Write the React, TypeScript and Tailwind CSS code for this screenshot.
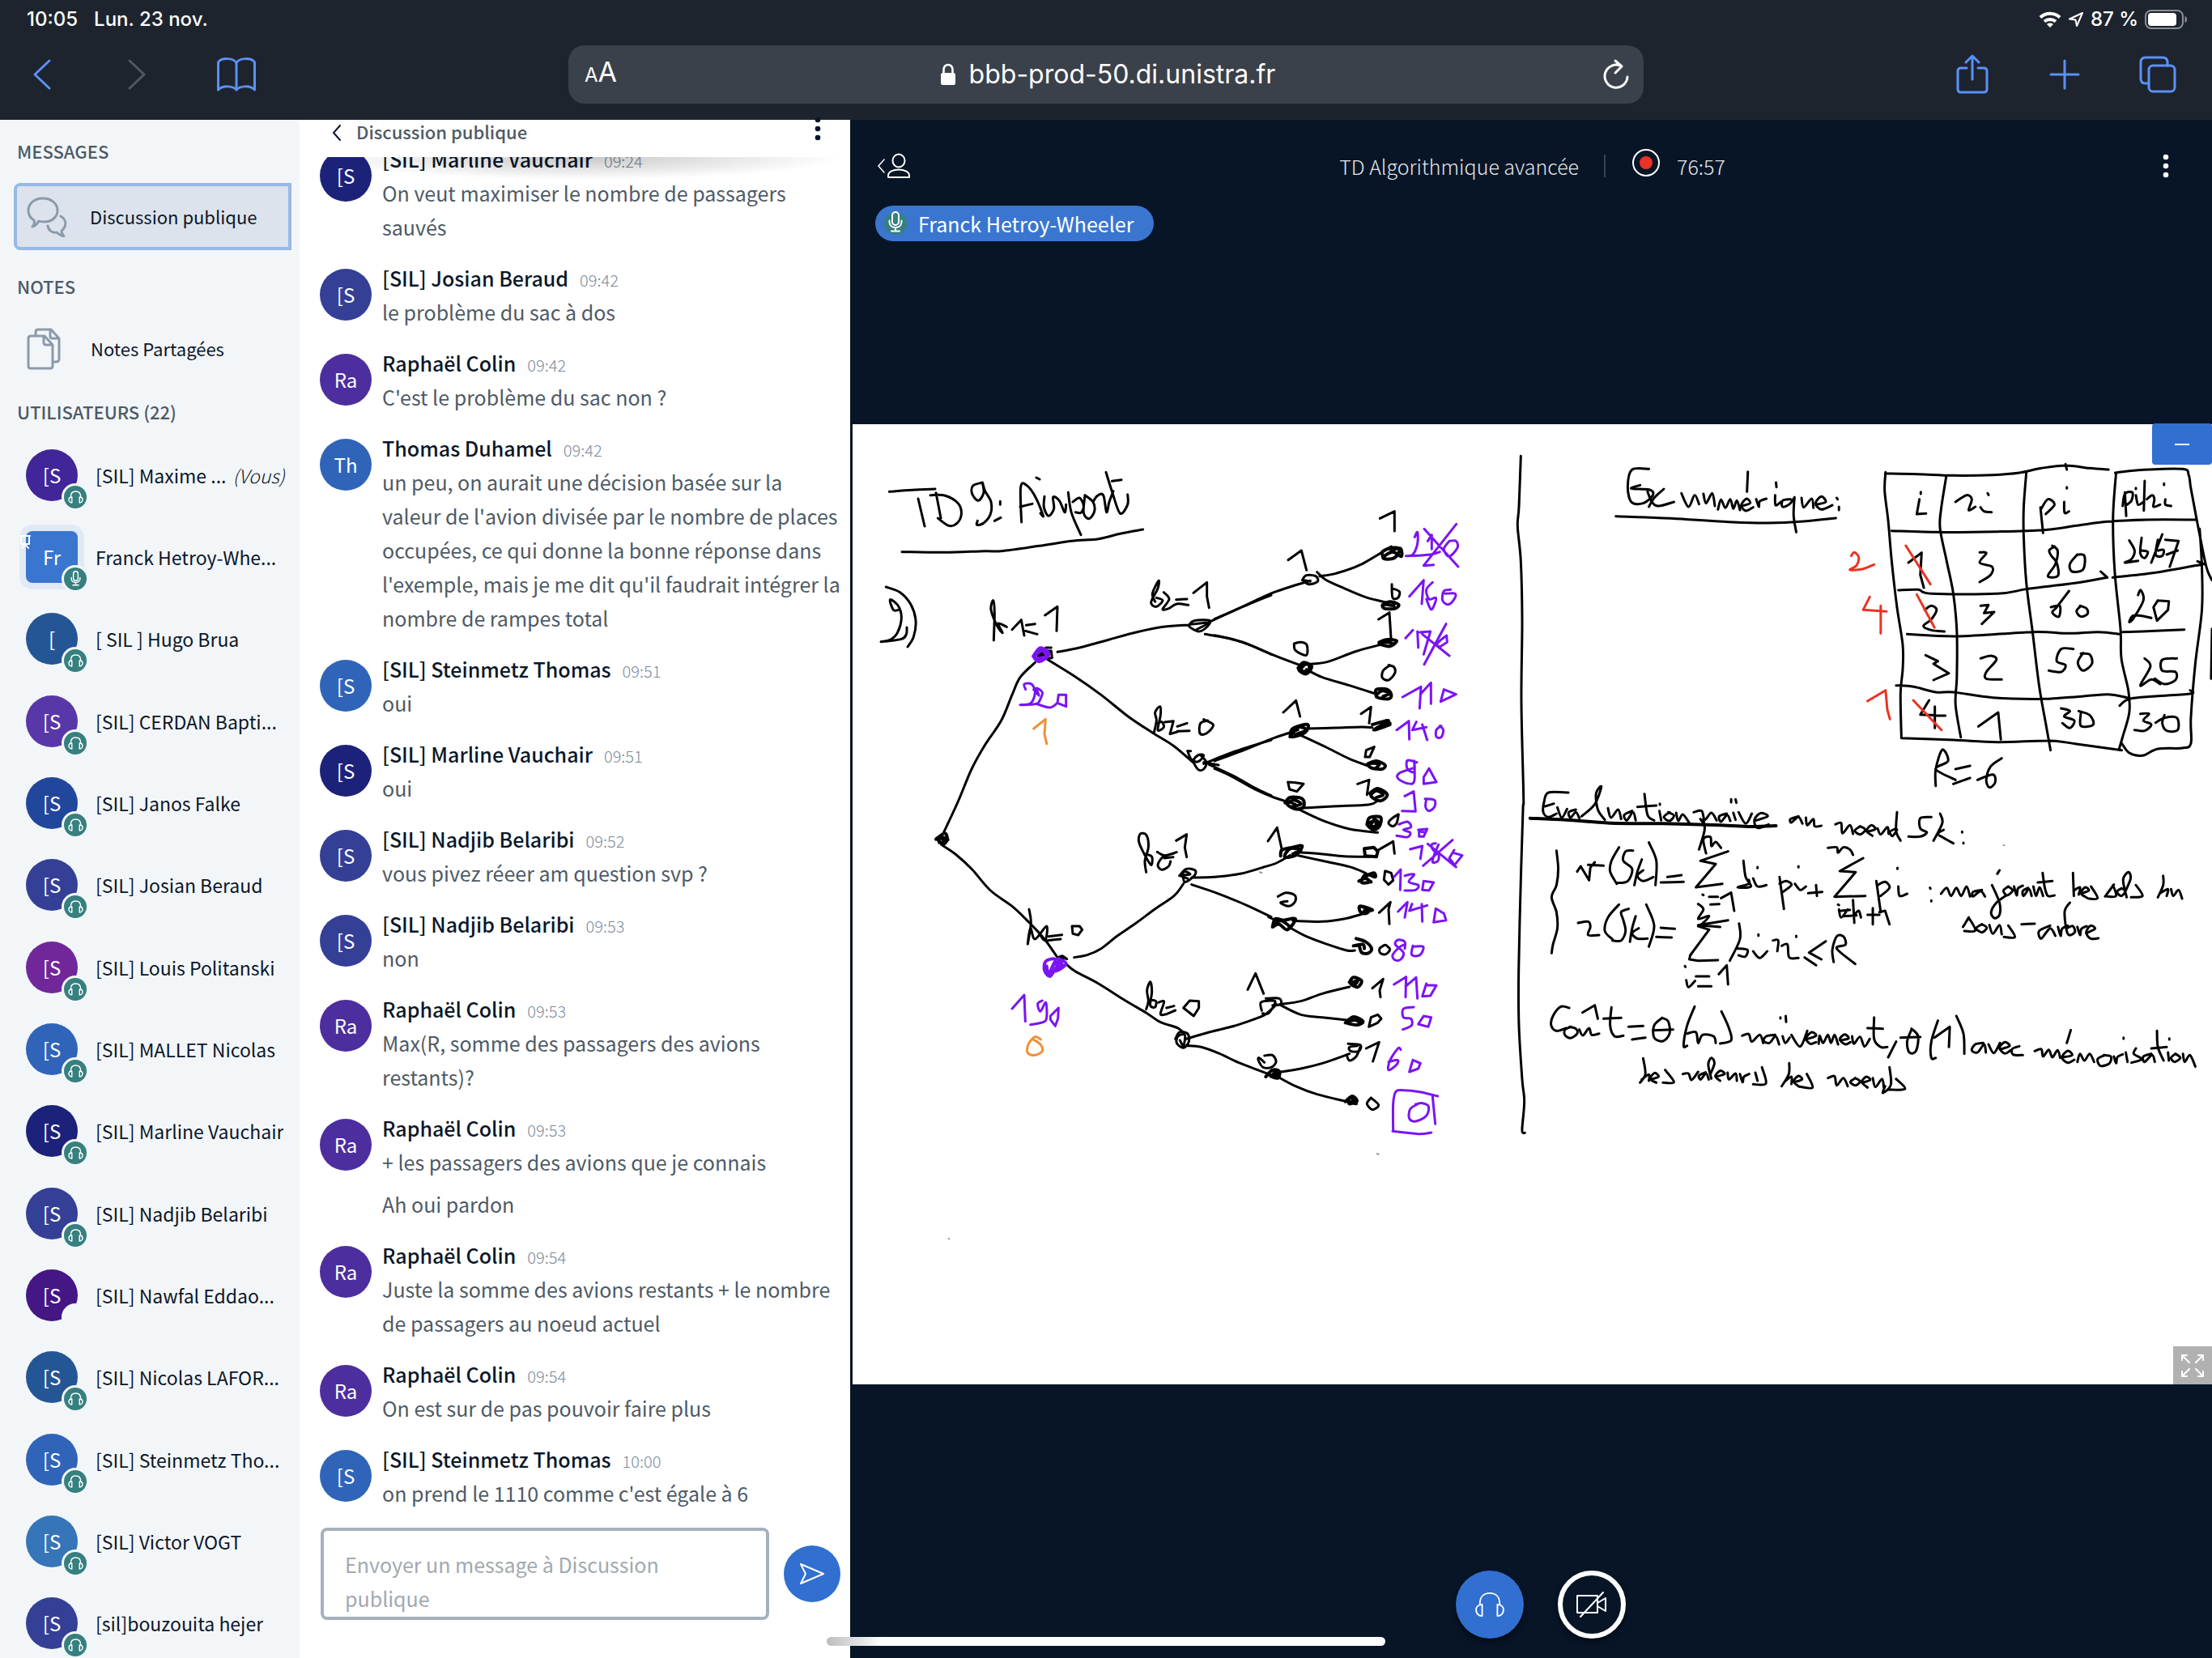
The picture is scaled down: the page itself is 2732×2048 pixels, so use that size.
import React from "react";

type IconProps = { className?: string };

const line = { fill: "none", stroke: "currentColor", strokeLinecap: "round", strokeLinejoin: "round" } as const;

function Headphones({ className, width = 2 }: IconProps & { width?: number }) {
  return (
    <svg viewBox="0 0 40 34" className={className} {...line} strokeWidth={width} aria-hidden="true">
      <path d="M7 16 C7 7 12 2 20 2 C28 2 33 7 33 16" />
      <path d="M10 17 V32 C5 32 2 28 2 24 C2 20 5 17 10 17 Z" />
      <path d="M30 17 V32 C35 32 38 28 38 24 C38 20 35 17 30 17 Z" />
    </svg>
  );
}

function Mic({ className }: IconProps) {
  return (
    <svg viewBox="0 0 18 26" className={className} {...line} strokeWidth={2} aria-hidden="true">
      <rect x="5" y="1" width="8" height="16" rx="4" />
      <path d="M1.500 11.500 V13 C1.500 17.500 5 20 9 20 C13 20 16.500 17.500 16.500 13 V11.500 M9 20 V24 M4 24.500 H14" />
    </svg>
  );
}

function Kebab({ className }: IconProps) {
  return (
    <svg viewBox="0 0 8 30" className={className} fill="currentColor" aria-hidden="true">
      <circle cx="4" cy="4" r="3.300" />
      <circle cx="4" cy="15" r="3.300" />
      <circle cx="4" cy="26" r="3.300" />
    </svg>
  );
}

/* ---------- Browser chrome ---------- */

function StatusBar() {
  return (
    <div className="flex h-12 items-center justify-between pl-[33px] pr-[30px] text-[24px] leading-8 font-medium text-white">
      <div className="flex gap-5">
        <span>10:05</span>
        <span>Lun. 23 nov.</span>
      </div>
      <div className="flex items-center gap-2">
        <svg viewBox="0 0 28 20" className="h-5 w-7" fill="none" stroke="currentColor" aria-hidden="true">
          <path d="M2 7.500 C8.500 1 19.500 1 26 7.500" strokeWidth="4" />
          <path d="M7 12.500 C11 9 17 9 21 12.500" strokeWidth="4" />
          <path d="M10 16 L14 20 L18 16 C16 14 12 14 10 16 Z" fill="currentColor" stroke="none" />
        </svg>
        <svg viewBox="0 0 20 20" className="h-5 w-5" {...line} strokeWidth={2} aria-hidden="true">
          <path d="M18 2 L2 9.500 L9.500 10.500 L11 18 Z" />
        </svg>
        <span>87 %</span>
        <svg viewBox="0 0 53 24" className="h-6 w-[53px]" aria-hidden="true">
          <rect x="1" y="1" width="46" height="22" rx="7" fill="none" stroke="#8a8e93" strokeWidth="2" />
          <rect x="4" y="4" width="35" height="16" rx="4" fill="#fff" />
          <path d="M49.500 8 C53 9 53 15 49.500 16 Z" fill="#8a8e93" />
        </svg>
      </div>
    </div>
  );
}

function Browser() {
  return (
    <header className="h-[148px] shrink-0 bg-[#1e242e] font-['Inter',sans-serif]">
      <StatusBar />
      <div className="flex h-[88px] items-center pl-[38px] pr-11 text-[#5a91f7]">
        <div className="flex w-[664px] shrink-0 items-center">
          <button type="button" aria-label="Précédent">
            <svg viewBox="0 0 30 40" className="h-10 w-[30px]" {...line} strokeWidth={3}>
              <path d="M23 3 L5 20 L23 37" />
            </svg>
          </button>
          <button type="button" aria-label="Suivant" className="ml-[87px] text-[#54585e]">
            <svg viewBox="0 0 30 40" className="h-10 w-[30px]" {...line} strokeWidth={3}>
              <path d="M5 3 L23 20 L5 37" />
            </svg>
          </button>
          <button type="button" aria-label="Signets" className="ml-[82px]">
            <svg viewBox="0 0 50 44" className="h-11 w-[50px]" {...line} strokeWidth={3}>
              <path d="M25 8 C22 1 6 1 2.500 7 V41 C8 35 21 36 25 41 C29 36 42 35 47.500 41 V7 C44 1 28 1 25 8 V41" />
            </svg>
          </button>
        </div>
        <div className="grid h-[72px] max-w-[1328px] flex-1 grid-cols-[1fr_auto_1fr] items-center rounded-[20px] bg-[#3b414a] pl-5 pr-4 text-white">
          <button type="button" aria-label="Options d’affichage" className="justify-self-start leading-10">
            <span className="text-[24px]">A</span>
            <span className="text-[34px]">A</span>
          </button>
          <div className="flex items-center gap-4 text-[32px] leading-10">
            <svg viewBox="0 0 20 28" className="h-7 w-5" aria-hidden="true">
              <path d="M4.500 13 V8 C4.500 0 15.500 0 15.500 8 V13" fill="none" stroke="#fff" strokeWidth="2.600" />
              <rect x="1" y="12" width="18" height="15" rx="2.500" fill="#fff" />
            </svg>
            <span>bbb-prod-50.di.unistra.fr</span>
          </div>
          <button type="button" aria-label="Recharger" className="justify-self-end">
            <svg viewBox="0 0 36 40" className="h-10 w-9" {...line} strokeWidth={3}>
              <path d="M32 23 A14 14 0 1 1 24 9.500 M17 3 L25 10 L17 18" />
            </svg>
          </button>
        </div>
        <div className="ml-auto flex shrink-0 items-center justify-end gap-[72px]">
          <button type="button" aria-label="Partager">
            <svg viewBox="0 0 44 52" className="h-[52px] w-11" {...line} strokeWidth={3}>
              <path d="M15 18 H8 Q4 18 4 22 V44 Q4 48 8 48 H36 Q40 48 40 44 V22 Q40 18 36 18 H29 M22 32 V3 M14 11 L22 3 L30 11" />
            </svg>
          </button>
          <button type="button" aria-label="Nouvel onglet">
            <svg viewBox="0 0 40 40" className="h-10 w-10" {...line} strokeWidth={3}>
              <path d="M20 3 V37 M3 20 H37" />
            </svg>
          </button>
          <button type="button" aria-label="Onglets">
            <svg viewBox="0 0 46 48" className="h-12 w-[46px]" {...line} strokeWidth={3}>
              <path d="M12 35 H8 Q2 35 2 29 V9 Q2 3 8 3 H29 Q35 3 35 9 V13" />
              <rect x="12" y="13" width="32" height="32" rx="5" />
            </svg>
          </button>
        </div>
      </div>
    </header>
  );
}

/* ---------- Sidebar ---------- */

type User = { name: string; initials: string; color: string; badge: "audio" | "mic" | "none"; you?: boolean; presenter?: boolean };

const users: User[] = [
  { name: "[SIL] Maxime ...", initials: "[S", color: "bg-[#402698]", badge: "audio", you: true },
  { name: "Franck Hetroy-Whe...", initials: "Fr", color: "bg-[#3a76cf]", badge: "mic", presenter: true },
  { name: "[ SIL ] Hugo Brua", initials: "[", color: "bg-[#245695]", badge: "audio" },
  { name: "[SIL] CERDAN Bapti...", initials: "[S", color: "bg-[#5837a8]", badge: "audio" },
  { name: "[SIL] Janos Falke", initials: "[S", color: "bg-[#20479b]", badge: "audio" },
  { name: "[SIL] Josian Beraud", initials: "[S", color: "bg-[#343f96]", badge: "audio" },
  { name: "[SIL] Louis Politanski", initials: "[S", color: "bg-[#71279a]", badge: "audio" },
  { name: "[SIL] MALLET Nicolas", initials: "[S", color: "bg-[#3064b9]", badge: "audio" },
  { name: "[SIL] Marline Vauchair", initials: "[S", color: "bg-[#1c2279]", badge: "audio" },
  { name: "[SIL] Nadjib Belaribi", initials: "[S", color: "bg-[#343f96]", badge: "audio" },
  { name: "[SIL] Nawfal Eddao...", initials: "[S", color: "bg-[#441784]", badge: "none" },
  { name: "[SIL] Nicolas LAFOR...", initials: "[S", color: "bg-[#245695]", badge: "audio" },
  { name: "[SIL] Steinmetz Tho...", initials: "[S", color: "bg-[#3064b9]", badge: "audio" },
  { name: "[SIL] Victor VOGT", initials: "[S", color: "bg-[#3575b8]", badge: "audio" },
  { name: "[sil]bouzouita hejer", initials: "[S", color: "bg-[#343f96]", badge: "audio" },
];

function UserAvatar({ user }: { user: User }) {
  return (
    <div
      className={`relative flex h-16 w-16 shrink-0 items-center justify-center text-[24px] text-white ${user.color} ${
        user.presenter ? "rounded-[8px] shadow-[0_0_0_8px_#e1eaf4]" : "rounded-full"
      }`}
    >
      {user.initials}
      {user.presenter && (
        <svg viewBox="0 0 14 18" className="absolute -left-2 top-1 h-[18px] w-3.5 text-white" {...line} strokeWidth={2} aria-hidden="true">
          <path d="M1 2 H13 M2 2 V12 H12 V2 M7 12 L3 17 M7 12 L11 17" />
        </svg>
      )}
      <span
        className={`absolute -right-3.5 -bottom-3 flex h-[34px] w-[34px] items-center justify-center rounded-full border-[3px] border-[#f3f6f9] ${
          user.badge === "none" ? "bg-[#f3f6f9]" : "bg-[#36807f]"
        }`}
      >
        {user.badge === "audio" && <Headphones className="h-4 w-[19px]" width={3} />}
        {user.badge === "mic" && <Mic className="h-[19px] w-[13px]" />}
      </span>
    </div>
  );
}

function Sidebar() {
  const heading = "pl-[21px] text-[22px] leading-8 font-medium text-[#4e5a66]";
  return (
    <nav className="flex w-[370px] shrink-0 flex-col bg-[#f3f6f9] pt-[22px] text-[#0b1729]">
      <h2 className={heading}>MESSAGES</h2>
      <button
        type="button"
        className="mt-6 mr-2.5 ml-[17px] flex h-[83px] items-center gap-7 rounded-l-[8px] border-4 border-[#97b9e6] bg-[#dce3ec] pl-3 text-[22px]"
      >
        <svg viewBox="0 0 50 50" className="h-[50px] w-[50px] text-[#8b9aaa]" {...line} strokeWidth={3} aria-hidden="true">
          <path d="M7 37 C9 35 10 32 9 29 C4 26 2 22 2 17 C2 8 10 2 20 2 C30 2 38 8 38 17 C38 25 31 31 22 31 C19 31 17 31 15 30 C13 34 10 36 7 37 Z" />
          <path d="M42 24 C47 27 49 32 47 37 C46 39 45 41 43 42 C43 45 44 47 46 49 C42 48 39 46 37 44 C32 45 27 42 26 36" />
        </svg>
        Discussion publique
      </button>
      <h2 className={`mt-7 ${heading}`}>NOTES</h2>
      <button type="button" className="mt-5 flex h-[83px] items-center gap-[37px] pl-[33px] text-[22px]">
        <svg viewBox="0 0 42 52" className="h-[52px] w-[42px] text-[#8b9aaa]" {...line} strokeWidth={3} aria-hidden="true">
          <path d="M2 13 Q2 10 5 10 H22 L32 21 V47 Q32 50 29 50 H5 Q2 50 2 47 Z M21 10 V18 Q21 21 24 21 H32" />
          <path d="M11 9 V5 Q11 2 14 2 H30 L40 13 V38 Q40 42 36 42 H33 M29 2 V10 Q29 13 32 13 H40" />
        </svg>
        Notes Partagées
      </button>
      <h2 className={`mt-5 ${heading}`}>UTILISATEURS (22)</h2>
      <ul className="mt-3 -mb-2 grid min-h-0 flex-1 auto-rows-fr grid-cols-1">
        {users.map((u) => (
          <li key={u.name} className="flex min-w-0 items-center gap-[22px] pr-2.5 pl-8">
            <UserAvatar user={u} />
            <span className="flex min-w-0 flex-1 gap-2 text-[23px] leading-[42px]">
              <span className="truncate">{u.name}</span>
              {u.you && <em className="shrink-0 font-light">(Vous)</em>}
            </span>
          </li>
        ))}
      </ul>
    </nav>
  );
}

/* ---------- Chat ---------- */

type Message = { name: string; time: string; initials: string; color: string; lines: string[] };

const messages: Message[] = [
  { name: "[SIL] Marline Vauchair", time: "09:24", initials: "[S", color: "bg-[#1c2279]", lines: ["On veut maximiser le nombre de passagers sauvés"] },
  { name: "[SIL] Josian Beraud", time: "09:42", initials: "[S", color: "bg-[#343f96]", lines: ["le problème du sac à dos"] },
  { name: "Raphaël Colin", time: "09:42", initials: "Ra", color: "bg-[#4d2e9f]", lines: ["C'est le problème du sac non ?"] },
  {
    name: "Thomas Duhamel",
    time: "09:42",
    initials: "Th",
    color: "bg-[#3064b9]",
    lines: [
      "un peu, on aurait une décision basée sur la valeur de l'avion divisée par le nombre de places occupées, ce qui donne la bonne réponse dans l'exemple, mais je me dit qu'il faudrait intégrer la nombre de rampes total",
    ],
  },
  { name: "[SIL] Steinmetz Thomas", time: "09:51", initials: "[S", color: "bg-[#3064b9]", lines: ["oui"] },
  { name: "[SIL] Marline Vauchair", time: "09:51", initials: "[S", color: "bg-[#1c2279]", lines: ["oui"] },
  { name: "[SIL] Nadjib Belaribi", time: "09:52", initials: "[S", color: "bg-[#343f96]", lines: ["vous pivez réeer am question svp ?"] },
  { name: "[SIL] Nadjib Belaribi", time: "09:53", initials: "[S", color: "bg-[#343f96]", lines: ["non"] },
  { name: "Raphaël Colin", time: "09:53", initials: "Ra", color: "bg-[#4d2e9f]", lines: ["Max(R, somme des passagers des avions restants)?"] },
  { name: "Raphaël Colin", time: "09:53", initials: "Ra", color: "bg-[#4d2e9f]", lines: ["+ les passagers des avions que je connais", "Ah oui pardon"] },
  { name: "Raphaël Colin", time: "09:54", initials: "Ra", color: "bg-[#4d2e9f]", lines: ["Juste la somme des avions restants + le nombre de passagers au noeud actuel"] },
  { name: "Raphaël Colin", time: "09:54", initials: "Ra", color: "bg-[#4d2e9f]", lines: ["On est sur de pas pouvoir faire plus"] },
  { name: "[SIL] Steinmetz Thomas", time: "10:00", initials: "[S", color: "bg-[#3064b9]", lines: ["on prend le 1110 comme c'est égale à 6"] },
];

function Chat() {
  return (
    <section className="flex w-[680px] shrink-0 flex-col bg-white">
      <div className="flex h-[46px] shrink-0 items-start justify-between pr-9 pl-10">
        <button type="button" className="flex h-7 items-center gap-[18px] text-[22px] font-medium text-[#4e5a66]">
          <svg viewBox="0 0 12 22" className="mt-1 h-[22px] w-3 text-[#0b1729]" {...line} strokeWidth={2} aria-hidden="true">
            <path d="M10 2 L2 11 L10 20" />
          </svg>
          Discussion publique
        </button>
        <button type="button" aria-label="Options de discussion" className="-mt-1 text-[#0b1729]">
          <Kebab className="h-[30px] w-2" />
        </button>
      </div>
      <div className="relative flex min-h-0 flex-1 flex-col justify-end gap-[21px] overflow-hidden pr-2.5 pb-[22px] pl-[25px]">
        <div className="absolute top-0 right-2.5 left-[25px] h-7 bg-[radial-gradient(farthest-side_at_50%_0,rgba(0,0,0,0.22),transparent)]" />
        {messages.map((m, i) => (
          <article key={i} className="flex shrink-0 gap-[13px]">
            <div className={`mt-2.5 flex h-16 w-16 shrink-0 items-center justify-center rounded-full text-[24px] text-white ${m.color}`}>{m.initials}</div>
            <div className="min-w-0 flex-1">
              <div className="flex h-[42px] items-baseline gap-3.5 leading-[42px]">
                <span className="text-[25px] font-medium text-[#0b1729]">{m.name}</span>
                <time className="text-[20px] leading-5 font-light text-[#7d8b9b]">{m.time}</time>
              </div>
              <div className="flex flex-col gap-2.5 text-[25px] leading-[42px] text-[#4e5a66]">
                {m.lines.map((l) => (
                  <p key={l}>{l}</p>
                ))}
              </div>
            </div>
          </article>
        ))}
      </div>
      <form className="mb-[47px] flex shrink-0 items-center gap-[18px] pr-3 pl-[26px]" onSubmit={(e) => e.preventDefault()}>
        <textarea
          aria-label="Message"
          placeholder="Envoyer un message à Discussion publique"
          className="block h-[114px] min-w-0 flex-1 resize-none overflow-hidden rounded-[8px] border-4 border-[#a7b1bd] px-[26px] pt-5 text-[25px] leading-[42px] placeholder:text-[#a2a8b0]"
        />
        <button type="submit" aria-label="Envoyer" className="flex h-[70px] w-[70px] shrink-0 items-center justify-center rounded-full bg-[#316fd1] text-white">
          <svg viewBox="0 0 32 28" className="h-7 w-8" {...line} strokeWidth={2}>
            <path d="M2 2 L30 14 L2 26 L8 14 Z" />
          </svg>
        </button>
      </form>
    </section>
  );
}

/* ---------- Whiteboard ink ---------- */

const BLACK = "#000000";
const PURPLE = "#7a14f5";
const ORANGE = "#f29036";
const RED = "#ea3323";

type Ink = { color: string; width?: number; strokes: string };
type Layer = { x: number; y: number; sx: number; sy: number; ink: Ink[] };

const T = 1 / 3;
const W = 852 / 1568;

/* Each stroke is a list of x,y points; strokes are separated by "|". A leading L keeps corners sharp. */
const layers: Layer[] = [
  {
    x: 1050, y: 540, sx: T, sy: T,
    ink: [
      {
        color: BLACK,
        strokes:
          "145,202 230,196 315,192|252,228 276,330|318,206 336,300|297,215 350,216 400,245 412,285 395,320 365,328 325,300|490,168 455,180 452,210 475,235 495,205 490,168 500,200 522,240 520,285 495,318 470,325 472,310|556,238 556,250|535,310 558,298|635,315 632,250 632,185 645,172 680,210 715,290 705,282|630,258 675,247|720,220 718,260 735,292 755,265 752,222 775,235 795,278 800,250|690,150 702,156|808,205 820,280 855,362|825,240 850,225 865,255 855,280 835,278|870,215 865,280 885,302 905,275 900,240 870,215|900,240 915,218 938,215 950,278 960,240 975,200|948,130 970,200 1000,282 1028,250 1028,212|970,163 1005,158|192,425 350,427 500,422 560,422 700,403 820,385 920,377 1000,358 1085,342|180,640 160,640 148,602 178,625 190,670 175,725 150,750 115,758 190,748 208,730 210,705|133,555 185,575 225,620 243,680 235,740 213,777|532,753 535,650 530,605 522,640 545,700 565,725 548,690 580,703|L600,713 634,677 645,735|652,697 685,692|650,718 693,730|L722,660 768,628 765,718|L725,780 745,780|L725,792 745,792 748,818 730,820|768,796 850,780 960,750 1060,723 1160,703 1255,696|1130,610 1120,580 1143,532 1140,560 1115,612 1135,628 1158,605 1135,595|1162,575 1182,600 1158,637 1180,635 1210,618 1253,622|1208,602 1248,600|L1272,577 1322,538 1322,590 1330,632|1255,696 1275,680 1332,680 1320,705 1290,720 1255,698 1295,690 1325,690 1285,712|1330,685 1440,635 1560,585|1315,730 1400,745 1480,770 1560,805|725,820 830,885 930,955 1030,1035 1120,1095 1200,1145 1270,1205|1125,1098 1135,1050 1130,1020 1148,998 1150,1030 1140,1085 1162,1075 1155,1055 1140,1060|L1165,1056 1198,1052 1185,1100 1212,1092|1212,1072 1248,1060|1212,1090 1257,1088|1325,1050 1298,1060 1295,1095 1310,1102 1330,1090 1345,1065 1310,1046|1250,1163 1265,1195 1290,1202 1310,1180 1290,1178 1272,1200 1290,1232 1310,1230 1320,1205 1300,1180|1250,1163 1262,1163|L1310,1205 1365,1215|1310,1210 1430,1163 1560,1122|1330,1213 1420,1255 1500,1300 1560,1328|345,1468 400,1350 450,1230 500,1140 560,1050 600,955 630,890 685,835",
      },
      { color: BLACK, width: 8, strokes: "704,814 712,808" },
      { color: PURPLE, width: 5, strokes: "680,812 705,782 735,805 700,830 683,810 712,790 728,812 695,822" },
      { color: PURPLE, strokes: "650,935 645,915 672,915 685,945 670,985 630,992 690,988 705,970 712,945 690,930 700,958 680,935|690,988 740,1002 768,985|L800,998 800,955 772,955 768,985 800,998" },
      { color: ORANGE, strokes: "L680,1080 724,1045 720,1100 728,1136" },
    ],
  },
  {
    x: 1050, y: 980, sx: T, sy: T,
    ink: [
      { color: BLACK, width: 4, strokes: "318,170 350,148 360,170 345,188 322,165 362,172 335,160 350,178 330,182" },
      {
        color: BLACK,
        strokes:
          "338,190 390,225 450,280 520,360 600,418 660,475 720,540 768,608|663,430 670,480 658,558 668,500 685,540 728,492 722,545 695,510|735,530 785,524|732,545 780,540|L822,492 825,520 845,525 860,505 850,492 822,492|768,612 785,602 803,614|775,606 795,612|830,608 880,598 930,575 990,528 1060,480 1130,428 1200,380 1235,335|1097,292 1092,250 1105,200 1098,155 1075,150 1070,180 1090,225 1115,265 1118,235 1095,225|1138,217 1165,230 1210,218|1200,222 1160,235 1140,265 1155,283 1180,270 1187,252|1165,240 1197,236|L1208,175 1247,152 1240,200 1247,236|1220,305 1245,280 1278,285 1275,305 1240,328 1235,290 1260,300 1225,305 1250,315|1265,312 1350,310 1450,297 1530,274|1265,338 1360,370 1470,415 1560,458|800,632 835,660 920,705 1020,768 1100,815 1150,848 1215,870 1240,895|1097,800 1105,770 1100,730 1112,698 1118,735 1112,785 1130,792 1133,770 1112,765|1143,775 1163,772 1150,818 1172,818|1172,795 1200,788|1172,818 1205,804|L1235,795 1258,768 1292,770 1292,795 1273,825 1235,795|1205,910 1220,885 1250,890 1255,920 1235,943 1210,925 1215,900 1240,895 1235,935 1222,915|1245,910 1330,885 1430,860 1500,836|1245,935 1300,940 1370,965 1440,998 1550,1040",
      },
      { color: PURPLE, width: 4, strokes: "770,612 800,630 770,655 745,655 760,615 725,622 720,655 740,678 760,650 780,620 755,635 735,668 728,640|775,620 790,640|780,635 770,645" },
      { color: PURPLE, strokes: "L600,798 645,747 649,845|712,768 695,780 705,808 725,775 728,830 715,848 668,857|L772,795 770,835 760,862 742,838 742,825 772,795" },
      { color: ORANGE, strokes: "706,912 685,902 660,930 658,962 685,970 712,955 705,930 675,910" },
    ],
  },
  {
    x: 1500, y: 600, sx: T, sy: T,
    ink: [
      {
        color: BLACK,
        strokes:
          "1135,-110 1128,80 1123,150 1135,280 1140,500 1137,800 1145,1150 1143,1200 1135,1460 1127,1800 1128,2000 1140,2200 1148,2280 1140,2380 1142,2397 1150,2398|0,494 100,450 220,395 355,352|L273,275 322,240 341,313|325,350 340,332 375,335 382,355 350,365 328,350 355,355|390,335 450,325 540,293 655,225|380,320 410,347 480,380 560,413 640,433|L613,121 667,95 667,168|657,365 660,415 680,415 685,392 657,380|0,554 100,578 220,628 330,670|340,662 420,652 520,615 612,590|295,585 300,610 340,628 342,590 320,580 295,585|340,680 400,710 500,740 600,772|L608,495 648,470 654,565|650,665 625,685 622,712 645,720 668,695 665,672 645,665|0,1020 120,975 220,935 310,905|L255,840 302,796 317,855|340,900 450,897 545,894 585,896|320,925 420,972 500,1012 575,1040|L543,845 580,820 573,880|L592,968 562,980 558,1005 575,1005 592,968|0,1048 60,1075 150,1125 220,1155 300,1180|L272,1098 278,1125 305,1133 330,1105 300,1100 272,1098|320,1195 440,1188 570,1182 600,1170|310,1198 400,1240 500,1272 605,1285|L530,1105 573,1090 565,1145",
      },
      {
        color: BLACK, width: 4,
        strokes:
          "625,265 622,245 655,230 685,235 670,265 640,272 625,265 660,245 692,262 688,232 655,240|625,440 650,430 682,440 670,455 630,455 625,440 665,445|310,675 330,655 360,670 340,697 312,680 345,660 350,685 322,685 330,660|610,580 640,570 675,575 650,595 610,585 640,580 660,585|598,775 600,755 640,755 655,775 645,790 600,782 620,760 650,770 625,780|280,930 290,900 345,885 335,915 285,930 310,895 340,905 300,922|585,885 645,870 590,905 650,885 600,900 650,880|568,1030 600,1020 632,1035 620,1050 580,1045 570,1030 610,1030 600,1045|262,1175 280,1155 325,1160 330,1190 300,1198 270,1180 295,1165 320,1180 285,1190|575,1140 605,1122 640,1145 615,1168 580,1150 600,1130 625,1145 600,1155",
      },
      {
        color: PURPLE,
        strokes:
          "742,190 752,172 752,215 735,255 712,260 800,255 835,245|L790,205 805,182 805,235|870,205 850,235 870,262 900,230 895,205 870,205|777,160 903,300|L896,142 775,296 812,293|L722,410 775,350 768,438|808,358 785,385 795,420 820,415 815,440 802,458 785,420|875,385 850,390 845,425 865,440 885,425 892,400 855,400|L708,565 735,535|752,540 755,600|L760,543 800,540 775,625|L770,550 870,630|L858,512 777,662|L860,555 862,580 835,597 820,590 840,570 860,555|L697,783 765,745 760,825|L765,770 802,730 802,808|L850,755 895,773 838,800 850,755|L675,905 720,872 722,940|L748,875 733,905 785,895|770,885 788,942|840,890 822,905 822,930 840,932 848,905 835,890|750,1025 715,1018 715,1050 740,1060 740,1020 740,1095 715,1103 680,1085 685,1065 740,1045|L795,1048 822,1098 775,1105 775,1080 795,1048|L705,1150 738,1133 745,1207 695,1205|785,1160 782,1190 795,1205 815,1190 815,1165 780,1160",
      },
    ],
  },
  {
    x: 1500, y: 1000, sx: T, sy: T,
    ink: [
      {
        color: BLACK,
        strokes:
          "680,18 655,35 645,50 660,62 675,50 682,18|180,214 230,198 280,170|L198,117 232,67 250,150|300,158 400,165 480,173 575,175|300,168 400,190 500,212 560,235|L610,148 662,118 667,163|L632,228 628,260 645,278 662,262 655,235 635,228|200,398 230,412|235,322 265,308 298,318 298,342 275,358 245,345 270,340|290,412 400,415 480,405 555,385|275,435 340,470 420,500 490,522 520,522|L610,382 652,343 645,370 648,424|630,502 612,515 615,532 635,536 650,518 635,502|150,776 190,758 230,722|L123,667 152,607 182,682|175,745 172,715 210,708 225,715 200,755 178,755|190,700 240,700 245,722 215,725|240,722 320,710 400,682 500,657|240,722 320,760 400,770 490,780|L585,662 625,628 612,670 615,695|L580,770 572,805 605,790 618,775 605,760 580,770|185,912 215,910 228,935 210,955 180,955 163,930 165,920 185,937|230,975 320,960 400,940 500,905|225,985 300,1025 380,1055 490,1082|495,868 540,872 535,895 505,895 500,880 530,875|540,880 525,915 500,930 490,910|L562,885 610,862 587,933|580,1068 565,1090 585,1112 608,1095 580,1068",
      },
      {
        color: BLACK, width: 4,
        strokes:
          "565,55 575,30 615,28 612,60 590,75 567,55 600,40 605,60 580,60 595,35 600,70|245,172 250,150 290,140 325,135 300,170 260,175 280,145 320,150 290,165|L555,145 590,140 605,155 600,175 558,172 555,145|535,265 560,255 575,268 545,270 560,240 595,250 590,235 560,250 580,268|215,435 225,405 255,410 300,405 270,445 240,425 215,435 245,412 275,430|540,358 575,370 560,385 540,378 540,358 585,372 555,375|525,478 560,490 582,515 570,532 545,530 535,505 515,505 550,500 555,515|500,640 515,622 545,635 530,658 505,645 530,635 520,650|485,790 515,768 550,785 530,798 490,790 520,780 540,790|190,990 215,965 240,970 235,995 205,985 240,980 220,975|485,1082 510,1062 528,1080 500,1090 500,1070 522,1075 505,1085 525,1090",
      },
      {
        color: PURPLE,
        strokes:
          "683,55 715,45 728,65 700,75 725,85 715,102 675,97|L755,75 788,72 775,100 758,100 758,80 780,85|L725,147 770,135 763,182|820,125 805,130 810,150 830,165 828,190 808,195 815,165 830,130|L790,127 895,213|L882,113 773,208|L888,150 870,180 890,205 918,170 885,160|L665,250 690,222 688,298|705,245 740,240 720,268 755,280 745,298 705,300|L775,265 812,270 795,300 770,298 775,265|L680,378 715,343 705,400|L732,350 722,375 788,355|768,350 770,415|L820,367 812,418 858,410 850,385 820,367|705,515 705,490 680,483 670,500 700,530 690,555 670,558 660,540 685,510 705,500|735,505 730,535 745,543 765,535 773,508 738,508|L665,648 710,620 708,695|L708,655 747,622 752,700|L785,645 770,692 800,690 822,652 785,650|738,732 700,738 700,770 728,775 730,800 698,815|L775,765 755,795 792,805 803,770 775,765|690,890 680,885 650,930 645,965 675,945 678,928 645,935|L735,928 722,972 755,960 763,940 735,928|662,1192 662,1090 672,1045 700,1040 760,1046 827,1062|808,1062 818,1165|660,1192 755,1202 803,1197|755,1090 725,1110 722,1145 745,1155 785,1135 793,1100 770,1088 745,1092",
      },
      { color: "#999999", width: 2, strokes: "602,1276 608,1277|168,232 175,234|-985,1590 -983,1591" },
    ],
  },
  {
    x: 1880, y: 520, sx: W, sy: T,
    ink: [
      {
        color: BLACK,
        strokes:
          "288,178 250,180 240,240 248,300 275,305 297,275 290,255 248,250 268,238|285,262 295,300 310,315 345,300|322,252 300,285 288,318|362,268 378,318 392,275 402,308|412,270 418,305 432,268 438,315|445,328 452,292 462,322 473,290 480,325 488,295 495,330|498,315 518,305 510,288 498,312 508,333 525,320|532,290 538,318 540,298 555,288|575,275 576,312 588,300|610,290 592,295 592,318 608,308 619,283|619,283 617,350 623,412|635,285 640,320 658,288 662,322|668,310 690,300 680,280 667,305 680,328 705,312|513,188 511,262|577,228 578,245|715,285 717,290|720,318 720,330|213,353 350,362 480,375 560,378 640,372 713,360|825,195 900,197 980,202 1070,200 1130,192 1180,175 1235,165 1290,175 1333,180|1235,160 1238,180|1348,192 1400,182 1500,178 1515,200 1520,250 1535,380 1555,540 1568,590|826,190 824,260 832,370 840,520 852,690 865,830 865,920 860,1010 862,1175|862,1175 980,1182 1080,1190 1200,1185 1260,1197 1363,1220|964,205 952,330 950,400 965,520 980,640 988,780 988,950 985,1050 997,1172|1146,190 1140,320 1140,430 1146,600 1160,780 1175,980 1190,1120 1201,1220|1350,192 1343,360 1347,560 1360,770 1362,880 1378,1000 1380,1080 1365,1170 1357,1215|1363,1195 1380,1230 1410,1240 1445,1215 1500,1212 1520,1195 1520,1100 1530,900 1545,700 1545,540 1540,400|840,407 950,412 1080,410 1185,404 1260,388 1330,373 1420,366 1530,366|855,627 900,625 930,640 1080,640 1150,622 1260,600 1330,580|1330,580 1315,558|1342,580 1440,562 1550,530|1550,530 1535,520|875,790 990,798 1160,782 1240,787 1310,782 1360,790|1365,782 1440,778 1505,773|850,980 890,985 940,1005 980,1005 1070,1025 1180,1030 1260,1022 1330,1013 1375,1025|1358,1055 1380,1030 1440,1020 1520,1010 1518,998|1568,770 1566,955|L903,290 897,345 918,343|906,263 906,270|985,300 1010,275 1022,290 1015,330 1030,318|1058,268 1060,274|1042,320 1050,335 1067,338|1178,320 1184,415|1180,325 1195,290 1210,310 1190,345|1232,300 1233,340 1243,335|1238,245 1238,250|1370,265 1373,352|1365,315 1370,270 1387,265 1385,295 1375,310|1395,275 1400,310 1412,300|1395,248 1395,252|1415,222 1413,332|1420,290 1432,275 1437,290 1435,318 1450,310|1462,290 1462,310 1475,315|1459,232 1459,237|L878,525 908,488 905,570 913,618|1040,487 1055,490 1040,525 1068,540 1065,570 1040,597|1210,465 1198,480 1203,500 1215,525 1218,573 1195,575 1212,530 1217,480 1205,462|1262,495 1245,530 1250,558 1275,550 1278,500 1262,495|1380,443 1392,480 1385,512 1370,525 1400,518|1408,433 1405,490 1415,508 1422,485 1408,480|1455,420 1430,525|1445,440 1440,495 1455,500 1458,478 1445,480|L1462,440 1492,445 1472,540|1465,495 1490,480|915,700 930,685 942,700 930,735 912,760 930,775 960,780|L1042,685 1060,682 1050,712 1073,708 1045,752|1243,630 1215,690 1205,710 1220,725 1222,685 1202,690|1270,685 1260,705 1270,725 1285,715 1283,695 1268,685|1400,645 1406,627 1412,665 1390,730 1380,745 1388,722 1408,722 1430,730|L1445,665 1470,668 1468,700 1443,740 1435,690 1445,665|L917,868 945,890 935,900 970,935 935,960|1042,880 1065,870 1078,885 1055,930 1055,955 1090,958|1253,845 1225,845 1215,890 1235,905 1225,930 1197,925|1275,860 1263,895 1275,925 1295,900 1290,865 1270,862|1415,880 1428,910 1405,980 1430,958 1450,975|1488,880 1455,885 1455,925 1485,930 1485,960 1460,975 1438,955|L925,1035 905,1088 962,1092|938,1058 938,1138|L1037,1132 1082,1080 1088,1180|1225,1065 1245,1075 1232,1095 1255,1110 1245,1138 1228,1120|1270,1080 1270,1130 1298,1125 1290,1090 1265,1075|1405,1085 1425,1085 1412,1110 1430,1125 1415,1148 1392,1145|1460,1090 1455,1120 1465,1148 1490,1145 1488,1100 1460,1100 1440,1118|940,1352 940,1290 955,1218 968,1260 940,1290 985,1330|985,1290 1018,1278|980,1345 1018,1323|1090,1250 1065,1280 1055,1330 1062,1358 1075,1340 1070,1310 1035,1330",
      },
      {
        color: RED,
        strokes:
          "L872,462 928,605|L897,643 937,765|L889,1035 953,1145|748,500 755,487 765,505 760,535 745,552 775,548 800,532|L790,652 775,700 828,706|815,685 815,787|L785,1038 826,998 830,1070 836,1105",
      },
    ],
  },
  {
    x: 1880, y: 960, sx: W, sy: T,
    ink: [
      { color: BLACK, width: 4, strokes: "18,152 100,158 200,170 320,172 450,178 520,183 577,180" },
      {
        color: BLACK,
        strokes:
          "105,57 60,57 50,90 48,130 60,148 78,135|52,108 72,98|80,112 90,150 102,118|122,120 106,130 110,150 122,130 130,152|135,145 165,100 180,35 168,60 172,120 188,158|195,115 202,150 218,120 225,155|250,125 232,140 238,160 252,130 258,160|278,62 285,140 300,160|262,110 305,105|312,125 316,160|335,130 322,148 335,162 345,142 332,130|350,132 355,162 365,138 380,170|313,98 313,102|390,130 408,125 415,158 430,132 442,160|465,135 448,145 452,165 466,140 473,162|480,132 485,158|492,130 508,172 522,135|532,160 558,145 542,133 528,158 535,188 560,175|475,82 475,93|485,82 487,95|628,145 610,155 612,168 628,148 637,172|645,150 648,178 662,155 665,182 680,180|712,175 725,170 728,208 745,178 752,210|768,182 756,198 768,212 780,195 768,182|785,202 803,192 793,178 783,200 796,217|808,190 815,212 830,185 833,210|850,190 836,202 842,218 852,195|852,130 850,200 860,235|930,148 905,152 905,190 920,205 905,220 878,220|950,135 955,170 935,235|958,195 945,210 958,225 980,245|1000,202 1000,205|1003,243 1003,245|78,272 82,340 78,400 67,445 78,500 80,560 70,620 67,652|L125,350 133,330 152,382 155,335 165,315|150,325 185,328|220,260 203,310 200,350 215,395|252,272 235,275 230,310 250,340 240,385 215,392|272,305 262,350 255,400|275,345 262,365 275,385 298,370|288,242 305,310 303,400|330,370 362,363|315,390 367,388|405,155 415,190 402,268|412,155 415,190|418,282 412,230 428,222 430,255 440,240 452,262|L468,275 405,310 440,322 395,408 455,395|410,435 412,437|425,443 445,443|428,472 448,470|L452,448 475,428 482,495|503,310 508,370 520,405 490,408 515,395 515,380|525,375 535,405 555,400|535,333 535,337|585,370 590,430 595,488|585,395 600,385 612,400 590,428|620,395 632,418 645,405|628,330 628,334|650,430 682,425|668,400 670,440|695,262 715,260 718,280 730,260 745,268 752,288|L775,300 722,348 758,352 710,443 780,440|720,490 725,520 740,490|718,472 720,474|725,495 745,492|730,515 760,512|752,455 755,540|755,510 765,495 770,520|785,510 812,510|797,485 797,545|L812,500 825,495 835,545|805,385 815,500|808,400 825,388 835,410 815,440|855,405 858,440 875,432|853,336 853,340|927,410 928,413|930,457 930,460|952,432 965,410 975,440 987,410 998,440 1010,405 1018,442|1045,418 1025,425 1025,442 1042,422 1052,442|1068,400 1085,465 1085,510 1073,522 1066,500 1078,465 1100,438|L1085,345 1080,358|1105,405 1094,420 1102,438 1115,420 1105,405|1118,405 1124,438 1127,412 1138,402|1150,410 1138,422 1140,440 1152,415 1158,440|1162,405 1168,440 1176,408 1184,440|1183,355 1188,410 1195,440 1210,438|1172,390 1205,385|1252,355 1254,440|1254,420 1268,408 1265,435|1272,430 1288,420 1280,408 1270,430 1285,448|1293,405 1308,448 1288,450|1345,398 1325,442|1343,400 1350,440 1330,442|1362,412 1352,425 1362,440 1371,422 1362,412|1372,420 1383,375 1378,352 1366,380 1374,445|1395,400 1410,440 1384,445|1457,365 1457,400 1445,445|1450,430 1468,415 1465,440|1475,415 1480,440 1492,418 1500,450|1002,555 1015,520|1015,520 1030,568 1005,570|1045,545 1032,560 1045,575 1056,558 1045,545|1062,548 1070,580 1085,548 1090,582|1105,550 1120,592 1095,592|1135,545 1165,543|1200,550 1175,570 1180,598 1200,560 1212,588|1218,555 1224,588 1227,562 1240,550|1245,465 1233,500 1240,580 1256,575 1252,552 1240,558|1262,555 1268,585 1271,562 1283,552|1282,578 1302,562 1292,550 1282,575 1292,598 1310,597|127,540 150,535 155,555 150,585 175,585|220,472 195,520 188,570 205,600|242,488 225,500 230,530 235,570 225,605 205,605|258,515 250,560 245,610|265,560 250,578 262,598 285,598|282,472 300,550 288,628|315,558 347,562|305,592 340,594|400,470 412,490 400,525 425,515 405,550|L468,530 400,548 450,555|L400,552 425,565 382,660 380,675 400,680 445,678|370,700 371,703|373,752 378,778 393,755|395,738 425,738|400,775 430,775|L447,730 465,697 468,768|493,542 495,600 472,680|490,635 512,640 507,665 492,660|525,645 540,670 557,645|537,583 537,587|570,605 582,605 580,645|590,625 603,620 607,668 628,670|623,588 623,592|L690,608 652,650 680,675|642,668 668,697|708,685 705,640 715,590 730,590 735,620 715,635 757,692|107,855 88,850 70,885 66,920 78,940 100,930|112,925 98,935 97,955 110,967 125,950 122,932 108,925|130,935 138,957 152,930 158,955 175,950|203,853 200,920 210,960 230,958|185,895 225,892|L137,872 165,845 172,895|242,925 275,922|250,972 280,965|318,892 300,920 300,965 320,978 335,950 332,905 318,892|297,938 343,935|392,850 375,920 367,995 375,995|375,950 395,945 400,985 410,955 435,960 440,985|453,868 470,930 475,975 450,987|500,958 515,952 522,980 540,955 548,985|575,955 555,960 549,977 562,985 576,960 584,990|592,960 598,985 608,965|612,955 632,998 648,940|648,970 668,958 658,945 645,968 655,988 668,982|674,988 676,958 684,985 695,955 702,985 710,955 718,990|724,975 742,968 733,953 722,972 735,990 746,982|750,960 754,988 768,962 778,998 790,970|587,890 587,894|599,885 600,907|800,890 800,970 815,1000 830,1000|785,930 820,932|850,980 832,1038|885,935 875,980 880,1020 895,1015 900,960 885,932|860,965 905,963|945,902 930,980 930,1040 940,1040|L937,965 972,925 970,1000|987,885 1003,950 1005,1025|1048,985 1030,990 1022,1012 1035,1020 1050,990 1054,1020|1060,990 1072,1022 1086,985|1088,1008 1108,996 1097,982 1085,1003 1097,1024 1110,1012|1130,997 1114,1007 1116,1028 1138,1030|1165,1015 1180,1008 1184,1035 1197,1010 1205,1038 1217,1012 1223,1040|1228,1038 1250,1030 1240,1014 1227,1038 1240,1058 1255,1047|1262,1055 1268,1025 1278,1050 1290,1025 1300,1055|1325,1030 1308,1045 1315,1070 1335,1060 1338,1035 1322,1030|1345,1035 1350,1060 1353,1037 1365,1027|1372,1020 1376,1055|1395,1005 1390,1025 1408,1045 1385,1058|1430,1025 1412,1035 1415,1055 1432,1030 1438,1055|1247,937 1238,985|1443,940 1445,1000 1458,1050|1430,1005 1465,1000|1367,965 1367,969|1471,968 1471,972|1468,1020 1470,1050|1485,1025 1475,1040 1483,1055 1496,1040 1485,1025|1502,1025 1506,1055 1518,1030 1530,1072|275,1042 280,1100 268,1132|272,1120 288,1102 288,1125|292,1120 310,1110 301,1096 291,1118 305,1132|325,1085 345,1130 320,1132|365,1100 378,1098 385,1122 400,1092|417,1094 402,1106 406,1120 418,1098 424,1120|428,1100 437,1060 430,1040 423,1065 430,1117|440,1110 460,1100 450,1088 439,1108 450,1125|467,1095 470,1120 485,1098 488,1125|495,1100 501,1130 504,1110 516,1100|530,1095 535,1125|545,1075 554,1135 525,1138|607,1060 606,1100 590,1145|597,1128 612,1110 612,1137|618,1130 636,1120 628,1107 617,1128 630,1147|647,1100 660,1150 632,1147|695,1115 710,1108 715,1142 730,1115 740,1145|757,1115 746,1130 758,1142 768,1127 757,1115|773,1132 791,1122 782,1110 772,1130 785,1150|797,1115 803,1148 818,1118 822,1150|835,1075 838,1140 820,1170 825,1145|850,1118 870,1155 832,1158",
      },
      { color: "#999999", width: 2, strokes: "1094,252 1096,253" },
    ],
  },
];

function toPath(stroke: string, layer: Layer): string {
  const sharp = stroke.startsWith("L");
  const pts = (sharp ? stroke.slice(1) : stroke).split(" ").map((p) => {
    const [x, y] = p.split(",").map(Number);
    return [layer.x + x * layer.sx, layer.y + y * layer.sy];
  });
  let d = `M${pts[0][0]} ${pts[0][1]}`;
  for (let i = 0; i < pts.length - 1; i++) {
    const p0 = pts[Math.max(0, i - 1)];
    const p1 = pts[i];
    const p2 = pts[i + 1];
    const p3 = pts[Math.min(pts.length - 1, i + 2)];
    d += sharp
      ? `L${p2[0]} ${p2[1]}`
      : `C${p1[0] + (p2[0] - p0[0]) / 6} ${p1[1] + (p2[1] - p0[1]) / 6} ${p2[0] - (p3[0] - p1[0]) / 6} ${p2[1] - (p3[1] - p1[1]) / 6} ${p2[0]} ${p2[1]}`;
  }
  return d;
}

function Whiteboard() {
  return (
    <div className="relative w-full bg-white">
      <svg viewBox="1053 524 1679 1186" className="block h-auto w-full" fill="none" strokeLinecap="round" strokeLinejoin="round" role="img" aria-label="Tableau blanc : TD 9, Airport">
        {layers.map((layer, i) =>
          layer.ink.map((ink, j) => (
            <path key={`${i}-${j}`} stroke={ink.color} strokeWidth={ink.width ?? 3} d={ink.strokes.split("|").map((s) => toPath(s, layer)).join("")} />
          )),
        )}
      </svg>
      <button type="button" aria-label="Réduire la présentation" className="absolute -top-px right-0 flex h-[51px] w-[74px] items-center justify-center rounded-[4px] bg-[#316fd1]">
        <span className="h-0.5 w-[18px] bg-white" />
      </button>
      <button type="button" aria-label="Plein écran" className="absolute right-0 bottom-0 flex h-[47px] w-12 items-center justify-center bg-[#b1b1b1] text-white">
        <svg viewBox="0 0 28 28" className="h-7 w-7" {...line} strokeWidth={2}>
          <path d="M1 7 V1 H7 M1 1 L10 10 M21 1 H27 V7 M27 1 L18 10 M1 21 V27 H7 M1 27 L10 18 M21 27 H27 V21 M27 27 L18 18" />
        </svg>
      </button>
    </div>
  );
}

/* ---------- Conference area ---------- */

function Conference() {
  return (
    <main className="flex min-w-0 flex-1 flex-col bg-[#081527] pl-[3px] text-white">
      <div className="mt-7 mb-5 grid h-[58px] shrink-0 grid-cols-[1fr_auto_1fr] items-center px-[29px]">
        <button type="button" aria-label="Afficher la liste des utilisateurs" className="justify-self-start">
          <svg viewBox="0 0 44 32" className="h-8 w-11" {...line} strokeWidth={2}>
            <path d="M10 8 L3 16 L10 24" strokeWidth="1.500" />
            <ellipse cx="28" cy="9.500" rx="7.500" ry="8" />
            <path d="M15 30 V28 C15 18 41 18 41 28 V30 Z" />
          </svg>
        </button>
        <div className="flex items-center text-[25px] font-light leading-10 text-[#e4e7ea]">
          <h1>TD Algorithmique avancée</h1>
          <span className="mr-8 ml-[31px] h-7 w-0.5 bg-[#39434f]" />
          <svg viewBox="0 0 36 36" className="mr-5 mb-2 h-9 w-9" role="img" aria-label="Enregistrement en cours">
            <circle cx="18" cy="18" r="16" fill="none" stroke="#fff" strokeWidth="2" />
            <circle cx="18" cy="18" r="8" fill="#ea3323" />
          </svg>
          <span>76:57</span>
        </div>
        <button type="button" aria-label="Options" className="mr-6 justify-self-end">
          <Kebab className="h-[30px] w-2" />
        </button>
      </div>
      <div className="ml-7 flex h-11 shrink-0 items-center gap-3.5 self-start rounded-full bg-[#3a76cf] pr-[25px] pl-[11px] text-[25px]">
        <span className="flex h-7 w-7 items-center justify-center rounded-full bg-[#36807f]">
          <Mic className="mb-1 h-[26px] w-[18px]" />
        </span>
        <span className="leading-10">Franck Hetroy-Wheeler</span>
      </div>
      <div className="flex min-h-0 flex-1 items-center">
        <Whiteboard />
      </div>
      <div className="flex shrink-0 justify-center gap-[42px] pt-1 pb-6 pl-5">
        <button type="button" aria-label="Quitter l’audio" className="flex h-[84px] w-[84px] items-center justify-center rounded-full bg-[#316fd1] shadow-[0_4px_6px_rgba(0,0,0,0.5)]">
          <Headphones className="h-8 w-[38px]" />
        </button>
        <button type="button" aria-label="Partager la webcam" className="flex h-[84px] w-[84px] items-center justify-center rounded-full border-[6px] border-white shadow-[0_4px_6px_rgba(0,0,0,0.5)]">
          <svg viewBox="0 0 38 32" className="h-8 w-[38px]" {...line} strokeWidth={2}>
            <path d="M1 5 H26 V26 H1 Z M26 14 L36 8 V24 L26 18 M5 31 L33 1" />
          </svg>
        </button>
      </div>
    </main>
  );
}

export default function App() {
  return (
    <div className="relative flex h-screen flex-col overflow-hidden font-['Noto_Sans_CJK_JP','Noto_Sans',sans-serif]">
      <Browser />
      <div className="flex min-h-0 flex-1">
        <Sidebar />
        <Chat />
        <Conference />
      </div>
      <div className="absolute bottom-[15px] left-[1021px] h-[11px] w-[690px] rounded-full bg-linear-to-r from-[#bdbdbd] to-white to-10%" />
    </div>
  );
}
